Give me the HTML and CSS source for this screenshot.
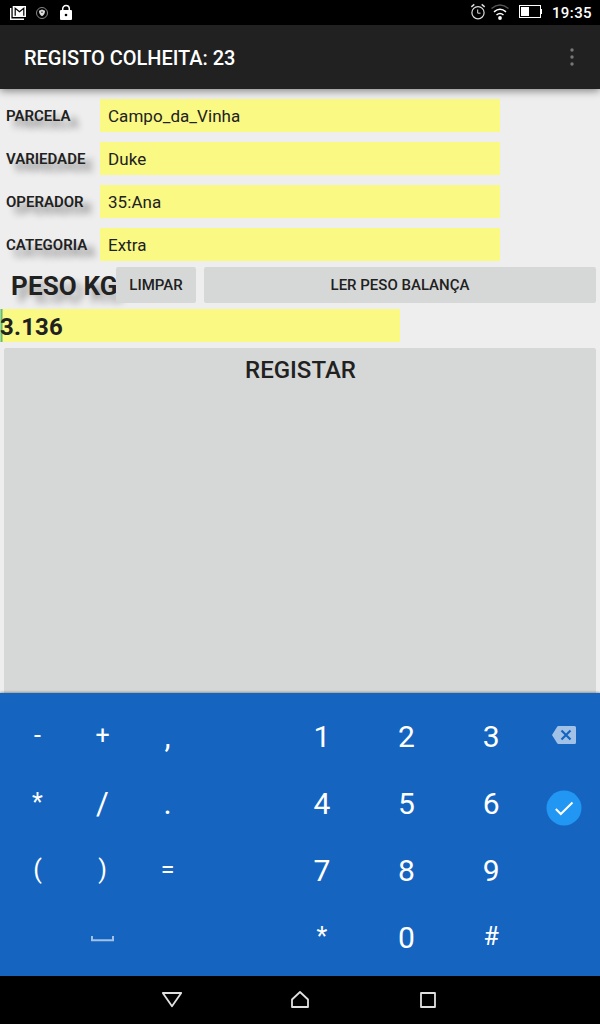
FILE: index.html
```
<!DOCTYPE html>
<html lang="pt">
<head>
<meta charset="utf-8">
<title>Registo Colheita</title>
<link rel="stylesheet" href="styles.css">
</head>
<body>
<header class="status">
  <svg class="status-left" width="80" height="25" viewBox="0 0 80 25">
    <path d="M10.700 8v11.300H24" fill="none" stroke="#fff" stroke-width="1.400"/>
    <path d="M12.700 6H26v11H12.700z" fill="#fff"/>
    <path d="M15.200 15.800V8.200l4.300 3.600 4.300-3.600v7.600" fill="none" stroke="#000" stroke-width="1.200"/>
    <circle cx="42" cy="13" r="5.500" fill="none" stroke="#aaa" stroke-width=".8"/>
    <path d="M42 9.500l3 1.200c0 2.700-1 4.300-3 5.500-2-1.200-3-2.800-3-5.500z" fill="#ddd"/>
    <path d="M41 11.500h2v1.500h-2z" fill="#777"/>
    <path d="M62.700 11V8.800a3.300 3.300 0 0 1 6.600 0V11" fill="none" stroke="#fff" stroke-width="1.500"/>
    <rect x="60" y="10" width="12" height="10" rx="1" fill="#fff"/>
    <circle cx="66" cy="15" r="1.300" fill="#000"/>
  </svg>
  <div class="status-right">
    <svg width="76" height="25" viewBox="468 0 76 25">
      <g fill="none" stroke="#ddd">
        <circle cx="478" cy="12.700" r="6.100" stroke-width="1.200"/>
        <path d="M477.700 9.500v3.700h2.800"/>
        <path d="M471.300 6.800l3-2.400M484.700 6.800l-3-2.400" stroke-width="1.500"/>
      </g>
      <g fill="none" stroke="#fff" stroke-width="1.500">
        <path d="M491.500 8.500q8.500-7 17 0" stroke="#555"/>
        <path d="M494 11.800q6-5 12 0"/>
        <path d="M496.500 15q3.500-3 7 0"/>
      </g>
      <circle cx="500" cy="18" r="1.900" fill="#fff"/>
      <rect x="519.500" y="5.500" width="21" height="12" fill="none" stroke="#fff"/>
      <path d="M521 7h8v9h-8zM541 9h1v5h-1z" fill="#fff"/>
    </svg>
    <span class="clock">19:35</span>
  </div>
</header>
<div class="appbar">
  <h1 class="title">REGISTO COLHEITA: 23</h1>
  <svg width="8" height="24" viewBox="0 0 8 24" fill="#777"><circle cx="4" cy="5" r="1.700"/><circle cx="4" cy="12" r="1.700"/><circle cx="4" cy="19" r="1.700"/></svg>
</div>
<main class="content">
  <div class="fields">
    <div class="row"><span class="label">PARCELA</span><span class="field">Campo_da_Vinha</span></div>
    <div class="row"><span class="label">VARIEDADE</span><span class="field">Duke</span></div>
    <div class="row"><span class="label">OPERADOR</span><span class="field">35:Ana</span></div>
    <div class="row"><span class="label">CATEGORIA</span><span class="field">Extra</span></div>
  </div>
  <div class="actions">
    <div class="weight-label">PESO KG</div>
    <button class="btn clear">LIMPAR</button>
    <button class="btn read">LER PESO BALANÇA</button>
  </div>
  <div class="weight">3.136</div>
  <button class="btn submit">REGISTAR</button>
</main>
<section class="keyboard">
  <span class="sym">-</span><span class="sym">+</span><span class="sym large">,</span><span></span>
  <span>1</span><span>2</span><span>3</span>
  <span class="icon-key"><svg class="del" width="24" height="18" viewBox="0 0 24 18"><path d="M6.500 0H22.500Q24 0 24 1.500v15q0 1.500-1.500 1.500H6.500Q5.500 18 5 17L0 9l5-8q.5-1 1.500-1z" fill="#a2c1e6"/><path d="M9.500 4.500l9 9M18.500 4.500l-9 9" stroke="#1565c0" stroke-width="2.200"/></svg></span>
  <span class="sym">*</span><span class="sym large">/</span><span class="sym large">.</span><span></span>
  <span>4</span><span>5</span><span>6</span>
  <span class="icon-key"><svg class="ok" width="36" height="36" viewBox="0 0 36 36"><circle cx="18" cy="18" r="17.500" fill="#2196f3"/><path d="M9.800 19l5 5L26.500 12.500" fill="none" stroke="#fff" stroke-width="2"/></svg></span>
  <span class="sym">(</span><span class="sym">)</span><span class="sym">=</span><span></span>
  <span>7</span><span>8</span><span>9</span><span></span>
  <span></span>
  <span class="icon-key"><svg class="space" width="23" height="6" viewBox="0 0 23 6"><path d="M1 0v4.200h21V0" fill="none" stroke="#a2c1e6" stroke-width="2"/></svg></span>
  <span></span><span></span>
  <span class="sym">*</span><span>0</span><span class="sym">#</span><span></span>
</section>
<nav class="nav">
  <svg width="24" height="24" viewBox="0 0 24 24"><path d="M2.800 5h18.400L12 18.200z"/></svg>
  <svg width="24" height="24" viewBox="0 0 24 24"><path d="M4 19v-7.500L12 4l8 7.500V19z"/></svg>
  <svg width="24" height="24" viewBox="0 0 24 24"><path d="M5 5h14v14H5z"/></svg>
</nav>
</body>
</html>
```
FILE: styles.css
```
* { box-sizing: border-box; }
body {
  margin: 0;
  width: 600px;
  height: 1024px;
  overflow: hidden;
  display: flex;
  flex-direction: column;
  font-family: Roboto, sans-serif;
  color: #212121;
  background: #eee;
}
svg { display: block; }
.status {
  height: 25px;
  flex: none;
  background: #000;
  display: flex;
  justify-content: space-between;
}
.status-right { display: flex; padding-right: 8px; gap: 8px; }
.clock { color: #fff; font-size: 15px; font-weight: 500; line-height: 26px; letter-spacing: .4px; }
.appbar {
  height: 64px;
  flex: none;
  background: #212121;
  display: flex;
  align-items: center;
  justify-content: space-between;
  padding: 0 24px;
  box-shadow: 0 2px 8px rgba(0, 0, 0, .45);
  z-index: 1;
}
.title { margin: 0; padding-top: 2px; color: #fff; font-size: 20px; font-weight: 500; letter-spacing: -.03px; }
.content { height: 604px; flex: none; display: flex; flex-direction: column; padding-top: 10px; overflow: hidden; }
.fields { display: flex; flex-direction: column; gap: 10px; }
.row { display: flex; height: 33px; align-items: center; }
.label {
  width: 100px;
  padding-left: 6px;
  font-size: 15px;
  font-weight: 600;
  letter-spacing: 0;
  text-shadow: 8px 7px 7px rgba(0, 0, 0, .45);
}
.field {
  width: 400px;
  height: 33px;
  padding: 1px 8px 0;
  background: #f9f984;
  font-size: 17px;
  line-height: 33px;
  letter-spacing: .05px;
}
.actions { display: flex; height: 36px; margin-top: 6px; padding-right: 4px; }
.weight-label {
  width: 116px;
  padding-left: 11px;
  white-space: nowrap;
  font-size: 26px;
  font-weight: 700;
  line-height: 38px;
  letter-spacing: .15px;
  text-shadow: 7px 7px 7px rgba(0, 0, 0, .35);
}
.btn {
  border: 0;
  border-radius: 2px;
  padding: 0;
  background: #d6d8d7;
  color: #212121;
  font-family: inherit;
  font-size: 15px;
  font-weight: 500;
}
.clear { width: 80px; position: relative; }
.read { flex: 1; margin-left: 8px; }
.weight {
  width: 400px;
  height: 33px;
  margin-top: 6px;
  background: linear-gradient(90deg, #a9d77e 1px, #63b98c 1px 2px, #a9d77e 2px 3px, #f9f984 3px);
  font-size: 24px;
  font-weight: 700;
  line-height: 37px;
  letter-spacing: .2px;
}
.submit {
  flex: 1;
  margin: 6px 3px 0 4px;
  margin-right: 4px;
  padding: 8px 0 0 1px;
  display: flex;
  justify-content: center;
  align-items: flex-start;
  border-radius: 2px 2px 0 0;
  font-size: 24px;
}
.keyboard {
  height: 283px;
  flex: none;
  padding: 10px 0 0 5px;
  background: #1565c0;
  color: #fff;
  font-size: 30px;
  line-height: 67px;
  text-align: center;
  display: grid;
  grid-template-columns: 65px 65px 65px 79.500px 84.700px 84.700px 84.700px 60px;
  grid-template-rows: repeat(4, 67px);
  box-shadow: 0 -1px 2px rgba(0, 0, 0, .3);
}
.sym { font-size: 25px; line-height: 66px; }
.large { font-size: 31px; line-height: 67px; }
.icon-key { display: flex; align-items: center; justify-content: center; }
.ok { margin-top: 9px; }
.del { margin-top: -4px; }
.space { margin-top: 2px; }
.nav {
  flex: 1;
  background: #000;
  display: flex;
  justify-content: center;
  gap: 104px;
  padding-top: 12px;
}
.nav path { fill: none; stroke: #e0e0e0; stroke-width: 1.800; stroke-linejoin: round; }
```
